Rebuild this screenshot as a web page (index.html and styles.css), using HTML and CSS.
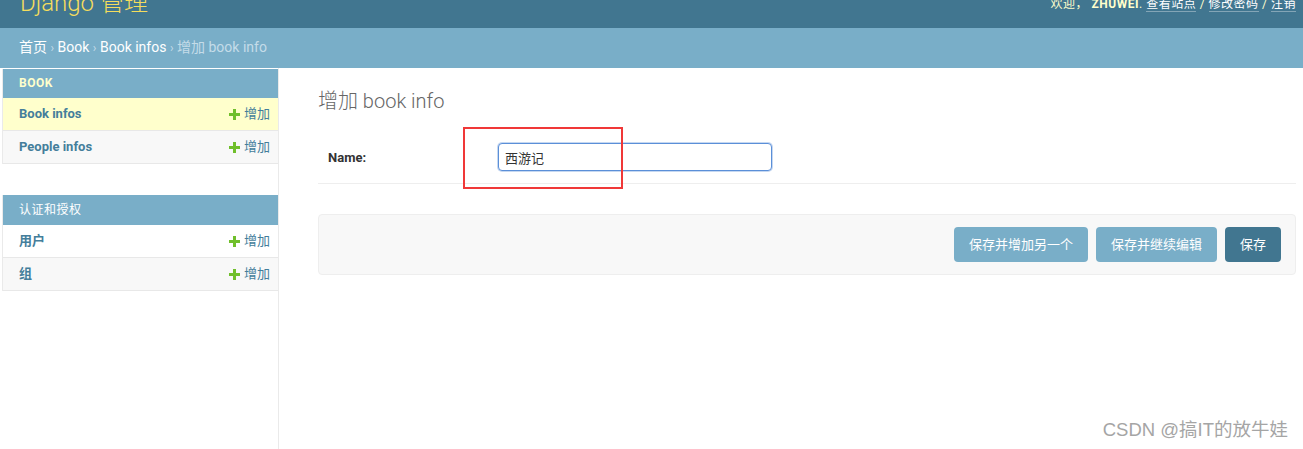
FILE: index.html
```html
<!DOCTYPE html>
<html lang="zh-hans">
<head>
    <meta charset="UTF-8">
    <meta name="viewport" content="width=device-width, initial-scale=1.0">
    <title>增加 book info | Django 站点管理员</title>
    <link rel="stylesheet" href="styles.css">
</head>
<body>
    <div id="header">
        <div class="branding">
            <h1 class="site-name"><a href="#">Django 管理</a></h1>
        </div>
        <div class="user-tools">
            欢迎， <strong>zhuwei</strong>.
            <a href="#">查看站点</a> /
            <a href="#">修改密码</a> /
            <a href="#">注销</a>
        </div>
    </div>

    <div class="breadcrumbs">
        <a href="#">首页</a> <span class="sep">›</span>
        <a href="#">Book</a> <span class="sep">›</span>
        <a href="#">Book infos</a> <span class="sep">›</span>
        <span class="current">增加 book info</span>
    </div>

    <div class="main">
        <nav class="sidebar">
            <div class="module current-app">
                <div class="caption"><a href="#">Book</a></div>
                <div class="model-row current-model">
                    <a class="model-name" href="#">Book infos</a>
                    <a class="addlink" href="#"><svg width="11" height="11" viewBox="0 0 11 11"><rect x="4" y="0" width="3" height="11" fill="#70bf2b"/><rect x="0" y="4" width="11" height="3" fill="#70bf2b"/></svg>增加</a>
                </div>
                <div class="model-row">
                    <a class="model-name" href="#">People infos</a>
                    <a class="addlink" href="#"><svg width="11" height="11" viewBox="0 0 11 11"><rect x="4" y="0" width="3" height="11" fill="#70bf2b"/><rect x="0" y="4" width="11" height="3" fill="#70bf2b"/></svg>增加</a>
                </div>
            </div>
            <div class="module">
                <div class="caption"><a href="#">认证和授权</a></div>
                <div class="model-row">
                    <a class="model-name" href="#">用户</a>
                    <a class="addlink" href="#"><svg width="11" height="11" viewBox="0 0 11 11"><rect x="4" y="0" width="3" height="11" fill="#70bf2b"/><rect x="0" y="4" width="11" height="3" fill="#70bf2b"/></svg>增加</a>
                </div>
                <div class="model-row">
                    <a class="model-name" href="#">组</a>
                    <a class="addlink" href="#"><svg width="11" height="11" viewBox="0 0 11 11"><rect x="4" y="0" width="3" height="11" fill="#70bf2b"/><rect x="0" y="4" width="11" height="3" fill="#70bf2b"/></svg>增加</a>
                </div>
            </div>
        </nav>

        <div class="content">
            <h1>增加 book info</h1>
            <form>
                <div class="form-row">
                    <label for="id_name">Name:</label>
                    <input type="text" id="id_name" value="西游记">
                </div>
                <div class="submit-row">
                    <button type="button">保存并增加另一个</button>
                    <button type="button">保存并继续编辑</button>
                    <button type="button" class="default">保存</button>
                </div>
            </form>
        </div>
    </div>

    <!-- 截图标注 -->
    <div class="mark-box"></div>
    <div class="watermark">CSDN @搞IT的放牛娃</div>
</body>
</html>
```

FILE: styles.css
```css
body {
    margin: 0;
    font-family: Roboto, "Noto Sans CJK SC", sans-serif;
    font-size: 14px;
    color: #333;
    background: #fff;
    overflow: hidden;
}
a {
    text-decoration: none;
}
#header {
    display: flex;
    justify-content: space-between;
    align-items: flex-end;
    height: 28px;
    padding: 0 7px 0 20px;
    background: #417690;
    overflow: hidden;
}
.site-name {
    margin: 0 0 13px;
    font-size: 24px;
    font-weight: 300;
    line-height: 24px;
}
.site-name a {
    color: #f5dd5d;
}
.user-tools {
    margin-bottom: 18px;
    font-size: 12px;
    line-height: 12px;
    color: #ffc;
    letter-spacing: 0.5px;
}
.user-tools strong {
    text-transform: uppercase;
    font-weight: 700;
}
.user-tools a {
    color: #fff;
    border-bottom: 1px solid rgba(255, 255, 255, 0.35);
}
.breadcrumbs {
    background: #79aec8;
    padding: 10px 19px;
    line-height: 19px;
    font-size: 14px;
    color: #c4dce8;
}
.breadcrumbs a {
    color: #fff;
}
.breadcrumbs .sep {
    font-size: 12px;
}
.main {
    display: flex;
    min-height: calc(100vh - 67px);
}
.sidebar {
    width: 276px;
    flex-shrink: 0;
    padding: 1px 0 0 2px;
    border-right: 1px solid #eaeaea;
}
.module {
    margin-bottom: 31px;
    border-left: 1px solid #eaeaea;
}
.caption {
    background: #79aec8;
    padding: 7px 16px 8px;
    line-height: 14px;
    font-size: 12px;
    font-weight: 700;
    letter-spacing: 0.5px;
}
.caption a {
    color: #fff;
}
.current-app .caption a {
    color: #ffc;
    text-transform: uppercase;
}
.module:not(.current-app) .caption {
    font-weight: 400;
    padding: 8px 16px;
}
.model-row {
    display: flex;
    justify-content: space-between;
    align-items: center;
    padding: 8px 8px 8px 16px;
    line-height: 16px;
    font-size: 13px;
    border-bottom: 1px solid #e8e8e8;
    background: #fff;
}
.model-row:nth-child(odd) {
    background: #f8f8f8;
}
.model-row.current-model {
    background: #ffc;
}
.model-name {
    color: #447e9b;
    font-weight: 700;
}
.addlink {
    display: flex;
    align-items: center;
    gap: 4px;
    color: #447e9b;
}
.content {
    flex: 1;
    padding: 21px 7px 20px 39px;
}
.content h1 {
    margin: 0 0 20px;
    font-size: 20px;
    font-weight: 300;
    line-height: 24px;
    color: #666;
}
.form-row {
    display: flex;
    align-items: center;
    padding: 10px 10px 12px;
    border-bottom: 1px solid #eee;
}
.form-row label {
    width: 160px;
    padding-right: 10px;
    font-size: 13px;
    font-weight: 700;
    color: #333;
}
.form-row input {
    width: 274px;
    height: 28px;
    box-sizing: border-box;
    padding: 5px 6px;
    border: 1px solid #5b8fd8;
    border-radius: 4px;
    box-shadow: 0 0 0 1px rgba(91, 143, 216, 0.35);
    font-family: "Noto Sans CJK SC", sans-serif;
    font-size: 13px;
    color: #333;
    outline: none;
}
.submit-row {
    display: flex;
    justify-content: flex-end;
    gap: 8px;
    margin-top: 30px;
    padding: 12px 14px;
    background: #f8f8f8;
    border: 1px solid #eee;
    border-radius: 4px;
}
.submit-row button {
    height: 35px;
    padding: 10px 15px;
    border: none;
    border-radius: 4px;
    background: #79aec8;
    color: #fff;
    font-family: Roboto, "Noto Sans CJK SC", sans-serif;
    font-size: 13px;
    line-height: 15px;
    cursor: pointer;
}
.submit-row button.default {
    background: #417690;
}
.mark-box {
    position: absolute;
    left: 463px;
    top: 127px;
    width: 156px;
    height: 58px;
    border: 2px solid #f03838;
}
.watermark {
    position: absolute;
    right: 15px;
    bottom: 8px;
    font-family: "Liberation Sans", "Noto Sans CJK SC", sans-serif;
    font-size: 18.5px;
    color: #a5a5a5;
    text-shadow: 0 0 1px #fff;
}
```
